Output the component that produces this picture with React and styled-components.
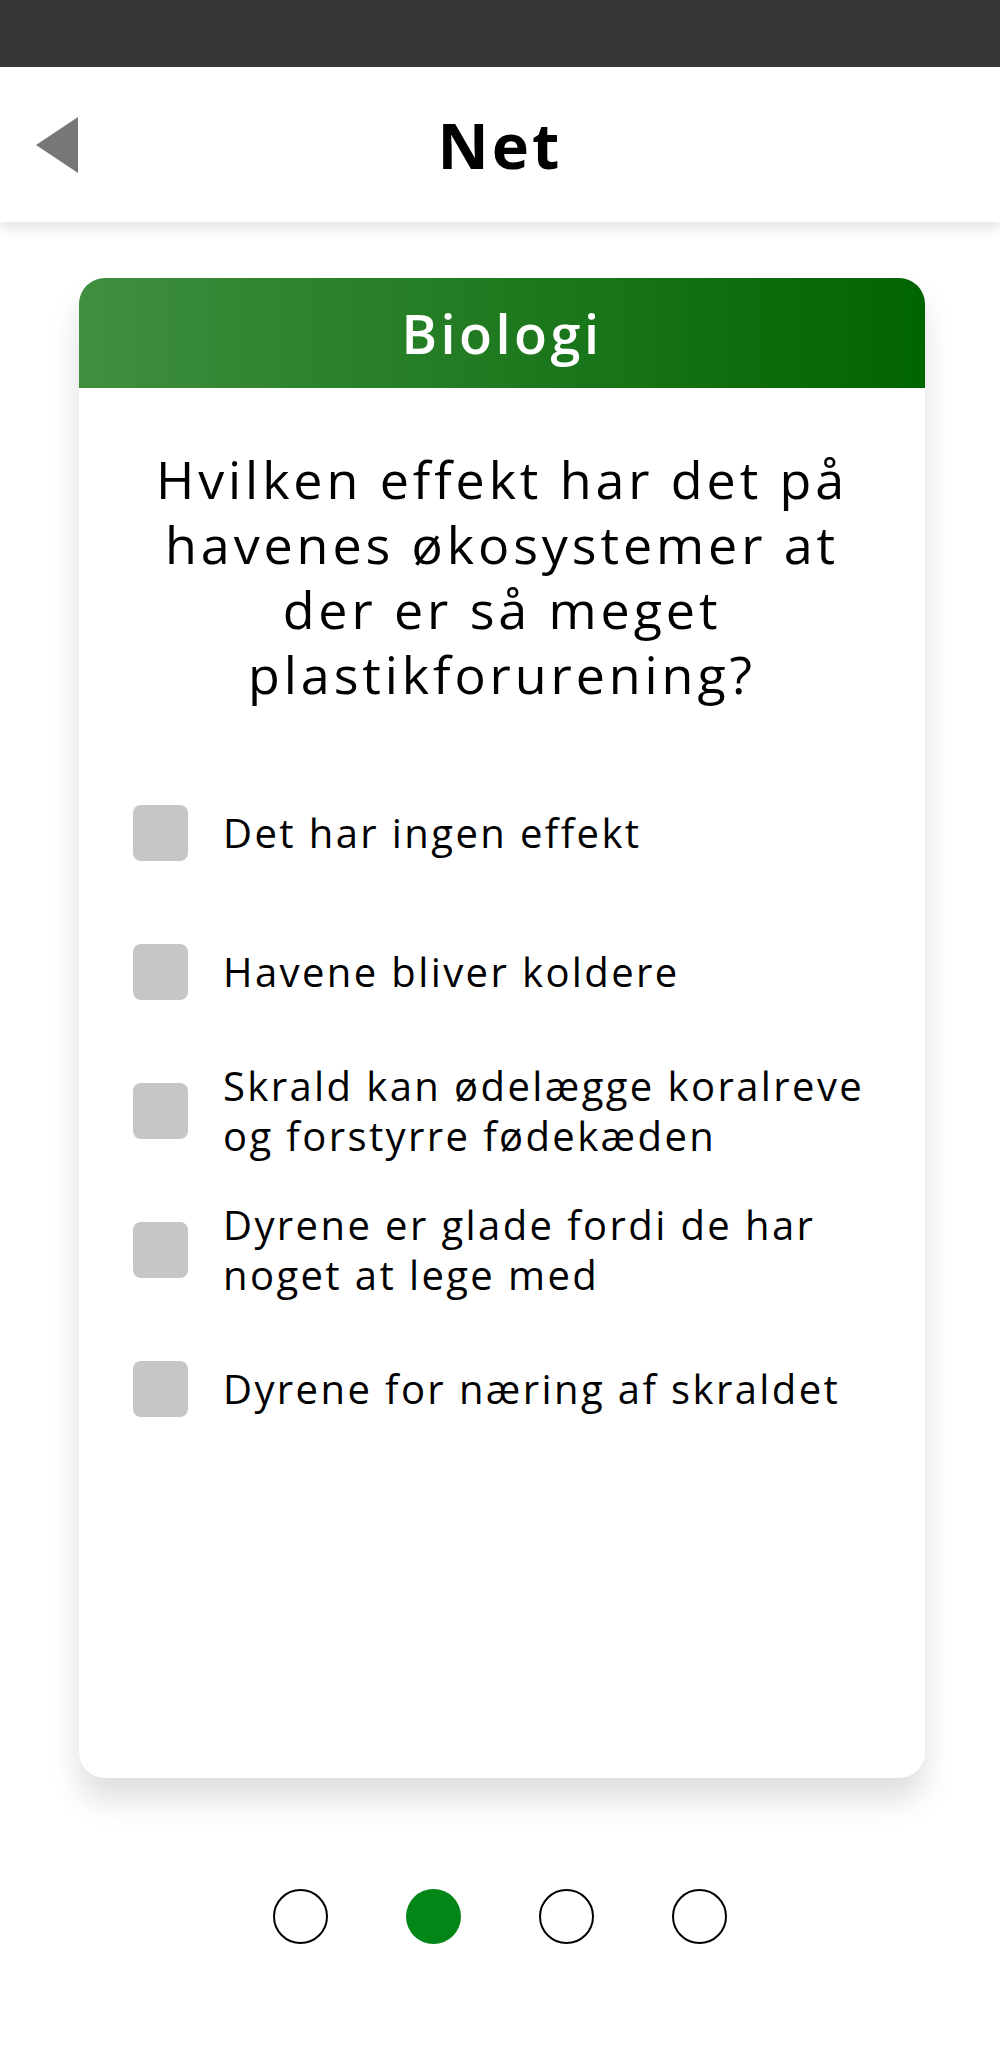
import React from "react";
import styled, { createGlobalStyle } from "styled-components";

const GlobalStyle = createGlobalStyle`
  body {
    margin: 0;
    background: #ffffff;
    font-family: "Open Sans", "Liberation Sans", sans-serif;
    color: #000;
  }
`;

const StatusBar = styled.div`
  height: 67px;
  background: #353535;
`;

const Header = styled.header`
  height: 155px;
  background: #ffffff;
  display: grid;
  grid-template-columns: 1fr auto 1fr;
  align-items: center;
  box-shadow: 0 8px 10px rgba(0, 0, 0, 0.09);
  position: relative;
`;

const BackButton = styled.button`
  justify-self: start;
  margin-left: 36px;
  padding: 0;
  border: none;
  background: none;
  display: flex;
`;

const Title = styled.h1`
  margin: 0;
  font-size: 63px;
  font-weight: 700;
  letter-spacing: 3px;
`;

const Main = styled.main`
  padding-top: 56px;
  display: flex;
  flex-direction: column;
  align-items: center;
`;

const Card = styled.section`
  width: 846px;
  height: 1500px;
  margin-left: 4px;
  border-radius: 26px;
  background: #fff;
  box-shadow: 0 22px 30px rgba(0, 0, 0, 0.13);
  overflow: hidden;
  display: flex;
  flex-direction: column;
`;

const CardHeader = styled.div`
  height: 110px;
  background: linear-gradient(to right, #3f8f3f, #006400);
  color: #fff;
  display: flex;
  align-items: center;
  justify-content: center;
  font-size: 54px;
  font-weight: 600;
  letter-spacing: 3.5px;
`;

const Question = styled.h2`
  margin: 58px 0 0;
  font-size: 52px;
  line-height: 65px;
  font-weight: 400;
  letter-spacing: 3.9px;
  text-align: center;
  white-space: nowrap;
`;

const Options = styled.ul`
  list-style: none;
  margin: 57px 0 0;
  padding: 0 0 0 54px;
`;

const Option = styled.li`
  height: 139px;
  display: flex;
  align-items: center;
  gap: 35px;
`;

const Checkbox = styled.span`
  flex: none;
  width: 55px;
  height: 56px;
  border-radius: 8px;
  background: #c6c6c6;
`;

const OptionText = styled.span`
  font-size: 40px;
  line-height: 50px;
  letter-spacing: 2.4px;
  white-space: nowrap;
`;

const Pager = styled.nav`
  margin-top: 111px;
  display: flex;
  justify-content: center;
  gap: 78px;
`;

const Dot = styled.span`
  width: 55px;
  height: 55px;
  box-sizing: border-box;
  border-radius: 50%;
  border: ${(p) => (p.$active ? "none" : "2px solid #000")};
  background: ${(p) => (p.$active ? "#038518" : "transparent")};
`;

const options = [
  ["Det har ingen effekt"],
  ["Havene bliver koldere"],
  ["Skrald kan ødelægge koralreve", "og forstyrre fødekæden"],
  ["Dyrene er glade fordi de har", "noget at lege med"],
  ["Dyrene for næring af skraldet"],
];

const questionLines = [
  "Hvilken effekt har det på",
  "havenes økosystemer at",
  "der er så meget",
  "plastikforurening?",
];

export default function App() {
  return (
    <>
      <GlobalStyle />
      <StatusBar />
      <Header>
        <BackButton aria-label="Tilbage">
          <svg width="43" height="56" viewBox="0 0 43 56">
            <polygon points="0,28 42,0 42,56" fill="#777" />
          </svg>
        </BackButton>
        <Title>Net</Title>
      </Header>
      <Main>
        <Card>
          <CardHeader>Biologi</CardHeader>
          <Question>
            {questionLines.map((line, i) => (
              <React.Fragment key={i}>
                {line}
                {i < questionLines.length - 1 && <br />}
              </React.Fragment>
            ))}
          </Question>
          <Options>
            {options.map((lines, i) => (
              <Option key={i}>
                <Checkbox />
                <OptionText>
                  {lines.map((l, j) => (
                    <React.Fragment key={j}>
                      {l}
                      {j < lines.length - 1 && <br />}
                    </React.Fragment>
                  ))}
                </OptionText>
              </Option>
            ))}
          </Options>
        </Card>
        <Pager>
          <Dot />
          <Dot $active />
          <Dot />
          <Dot />
        </Pager>
      </Main>
    </>
  );
}
